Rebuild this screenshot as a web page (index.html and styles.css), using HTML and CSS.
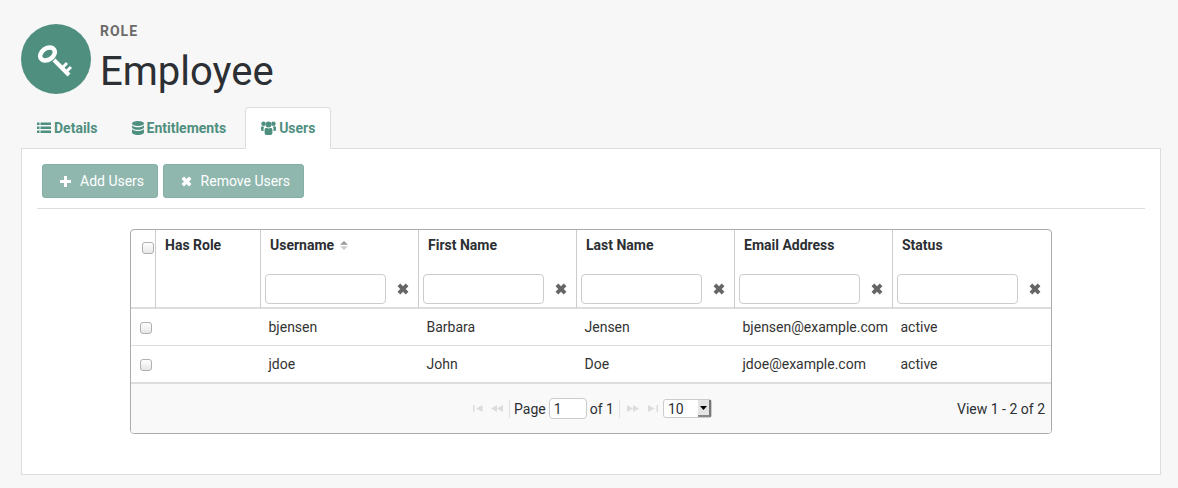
FILE: index.html
```html
<!DOCTYPE html>
<html lang="en">
<head>
  <meta charset="UTF-8" />
  <title>Role – Employee</title>
  <link rel="stylesheet" href="styles.css">
</head>
<body>
  <header class="page-head">
    <div class="avatar">
      <svg width="70" height="70" viewBox="0 0 70 70">
        <g fill="none" stroke="#fff">
          <ellipse cx="26.500" cy="30" rx="8" ry="5.700" stroke-width="4.400" transform="rotate(-35 26.500 30)"/>
          <path d="M33 36L48 51" stroke-width="4"/>
          <path d="M41 44l5-5M45 48l5-5" stroke-width="3"/>
        </g>
      </svg>
    </div>
    <div class="titles">
      <div class="kind">ROLE</div>
      <h1>Employee</h1>
    </div>
  </header>

  <nav class="tabs">
    <a class="tab">
      <svg class="ico" width="14" height="12" viewBox="0 0 14 12"><path d="M0 .5h2.500v2.500H0zM3.500 .5H14v2.500H3.500zM0 4.500h2.500v2.500H0zM3.500 4.500H14v2.500H3.500zM0 8.500h2.500V11H0zM3.500 8.500H14V11H3.500z"/></svg>Details
    </a>
    <a class="tab">
      <svg class="ico" width="12" height="14" viewBox="0 0 12 14"><ellipse cx="6" cy="2.500" rx="6" ry="2.500"/><path d="M0 4.200c1 1.400 3.500 2 6 2s5-.6 6-2v2.300c-.6 1.500-3.200 2.300-6 2.300s-5.400-.8-6-2.300zM0 8c1 1.400 3.500 2 6 2s5-.6 6-2v3.300C12 13 9.300 14 6 14s-6-1-6-2.700z"/></svg>Entitlements
    </a>
    <a class="tab active">
      <svg class="ico" width="15" height="14" viewBox="0 0 15 14"><circle cx="7.500" cy="3.600" r="3"/><circle cx="2.500" cy="2.800" r="2.200"/><circle cx="12.500" cy="2.800" r="2.200"/><path d="M3.600 8.500C3.600 7.500 4.600 6.700 5.600 7c1.200.5 2.600.5 3.800 0 1-.3 2 .5 2 1.500v3.600c0 1.200-.9 1.900-1.800 1.900H5.400c-.9 0-1.800-.7-1.800-1.900zM0 6.500c0-1 1.200-1.300 2-1.100.5.200 1 .3 1.600.2-.7.600-1.100 1.500-1.100 2.600v1.700H1.200C.5 9.900 0 9.400 0 8.700zM15 6.500c0-1-1.200-1.300-2-1.100-.5.200-1 .3-1.600.2.700.6 1.100 1.500 1.100 2.600v1.700h1.300c.7 0 1.200-.5 1.200-1.200z"/></svg>Users
    </a>
  </nav>

  <section class="panel">
    <div class="toolbar">
      <button class="btn">
        <svg width="11" height="11" viewBox="0 0 11 11"><path d="M4 0h3v4h4v3H7v4H4V7H0V4h4z"/></svg>Add Users
      </button>
      <button class="btn">
        <svg width="11" height="11" viewBox="0 0 11 11"><path d="M3 .5l2.500 2.500L8 .5l2.500 2.500L8 5.500 10.500 8 8 10.500 5.500 8 3 10.500.5 8 3 5.500.5 3z"/></svg>Remove Users
      </button>
    </div>

    <div class="grid">
      <table>
        <colgroup>
          <col class="c-check"><col class="c-role"><col class="c-data"><col class="c-data"><col class="c-data"><col class="c-data"><col>
        </colgroup>
        <thead>
          <tr>
            <th class="cell-check"><input type="checkbox"></th>
            <th class="th-plain">Has Role</th>
            <th>
              <div class="th-label">Username
                <svg class="sort" width="8" height="9" viewBox="0 0 8 9"><path d="M4 0l4 3.800H0z" fill="#999"/><path d="M4 9L0 5.200h8z" fill="#ccc"/></svg>
              </div>
              <div class="filter"><input type="text"><svg class="clear" width="12" height="12" viewBox="0 0 11 11"><path d="M3 .5l2.500 2.500L8 .5l2.500 2.500L8 5.500 10.500 8 8 10.500 5.500 8 3 10.500.5 8 3 5.500.5 3z"/></svg></div>
            </th>
            <th>
              <div class="th-label">First Name</div>
              <div class="filter"><input type="text"><svg class="clear" width="12" height="12" viewBox="0 0 11 11"><path d="M3 .5l2.500 2.500L8 .5l2.500 2.500L8 5.500 10.500 8 8 10.500 5.500 8 3 10.500.5 8 3 5.500.5 3z"/></svg></div>
            </th>
            <th>
              <div class="th-label">Last Name</div>
              <div class="filter"><input type="text"><svg class="clear" width="12" height="12" viewBox="0 0 11 11"><path d="M3 .5l2.500 2.500L8 .5l2.500 2.500L8 5.500 10.500 8 8 10.500 5.500 8 3 10.500.5 8 3 5.500.5 3z"/></svg></div>
            </th>
            <th>
              <div class="th-label">Email Address</div>
              <div class="filter"><input type="text"><svg class="clear" width="12" height="12" viewBox="0 0 11 11"><path d="M3 .5l2.500 2.500L8 .5l2.500 2.500L8 5.500 10.500 8 8 10.500 5.500 8 3 10.500.5 8 3 5.500.5 3z"/></svg></div>
            </th>
            <th>
              <div class="th-label">Status</div>
              <div class="filter"><input type="text"><svg class="clear" width="12" height="12" viewBox="0 0 11 11"><path d="M3 .5l2.500 2.500L8 .5l2.500 2.500L8 5.500 10.500 8 8 10.500 5.500 8 3 10.500.5 8 3 5.500.5 3z"/></svg></div>
            </th>
          </tr>
        </thead>
        <tbody>
          <tr>
            <td class="cell-check"><input type="checkbox"></td>
            <td></td>
            <td>bjensen</td>
            <td>Barbara</td>
            <td>Jensen</td>
            <td>bjensen@example.com</td>
            <td>active</td>
          </tr>
          <tr>
            <td class="cell-check"><input type="checkbox"></td>
            <td></td>
            <td>jdoe</td>
            <td>John</td>
            <td>Doe</td>
            <td>jdoe@example.com</td>
            <td>active</td>
          </tr>
        </tbody>
      </table>

      <div class="pager">
        <div class="pager-main">
          <svg class="pg first" width="10" height="7" viewBox="0 0 10 7"><path d="M0 0h1.500v7H0zM9.500 0v7L3 3.500z"/></svg>
          <svg class="pg prev" width="12" height="7" viewBox="0 0 12 7"><path d="M6 0v7L0 3.500zM12 0v7L6 3.500z"/></svg>
          <span class="sep"></span>
          <span class="page-label">Page</span>
          <input class="page-input" type="text" value="1">
          <span>of 1</span>
          <span class="sep sep-right"></span>
          <svg class="pg next" width="12" height="7" viewBox="0 0 12 7"><path d="M0 0v7l6-3.500zM6 0v7l6-3.500z"/></svg>
          <svg class="pg last" width="10" height="7" viewBox="0 0 10 7"><path d="M0 0v7l6.500-3.500zM8.500 0H10v7H8.500z"/></svg>
          <div class="page-size">
            <span>10</span>
            <span class="arrow"><svg width="7" height="4" viewBox="0 0 7 4"><path d="M0 0h7L3.500 4z"/></svg></span>
          </div>
        </div>
        <div class="pager-info">View 1 - 2 of 2</div>
      </div>
    </div>
  </section>
</body>
</html>
```

FILE: styles.css
```css
html, body {
  height: 100%;
}

body {
  background-color: #f7f7f7;
  color: #2c2f33;
  font-family: Roboto, "Liberation Sans", sans-serif;
  font-size: 14px;
  margin: 0;
  padding: 24px 17px 13px 21px;
  box-sizing: border-box;
  overflow: hidden;
}

.page-head {
  display: flex;
  gap: 9px;
  height: 83px;
}

.avatar {
  width: 70px;
  height: 70px;
  border-radius: 50%;
  background: #4f8f80;
}

.kind {
  font-size: 14px;
  font-weight: 700;
  letter-spacing: 1px;
  color: #6c6a69;
  line-height: 15px;
}

h1 {
  font-size: 40px;
  font-weight: 400;
  line-height: 50px;
  margin: 8px 0 0;
}

.tabs {
  display: flex;
  height: 42px;
  margin-bottom: -1px;
  position: relative;
}

.tab {
  display: flex;
  align-items: center;
  gap: 3px;
  padding: 0 15px;
  color: #4f8f80;
  font-weight: 700;
  font-size: 14px;
  border: 1px solid transparent;
  border-radius: 4px 4px 0 0;
  margin-right: 2px;
}

.tab.active {
  background: #fff;
  border-color: #ddd;
  border-bottom-color: #fff;
  margin-left: 1px;
}

.ico {
  fill: #4f8f80;
}

.panel {
  background: #fff;
  border: 1px solid #ddd;
  height: 327px;
  box-sizing: border-box;
  padding: 15px 15px 0;
}

.toolbar {
  display: flex;
  gap: 5px;
  padding: 0 0 10px 5px;
  border-bottom: 1px solid #ddd;
}

.btn {
  display: flex;
  align-items: center;
  gap: 9px;
  height: 34px;
  padding: 0 12.500px 0 17px;
  background: #8fb7ae;
  border: 1px solid #85afa6;
  border-radius: 3px;
  color: #fff;
  font-family: inherit;
  font-size: 14px;
}

.btn svg {
  fill: #fff;
}

.grid {
  width: 922px;
  height: 205px;
  box-sizing: border-box;
  margin: 20px auto 0;
  border: 1px solid #aaa;
  border-radius: 4px;
  overflow: hidden;
  display: flex;
  flex-direction: column;
}

table {
  width: 100%;
  table-layout: fixed;
  border-collapse: separate;
  border-spacing: 0;
}

.c-check {
  width: 24px;
}

.c-role {
  width: 105px;
}

.c-data {
  width: 158px;
}

th {
  height: 79px;
  padding: 0;
  text-align: left;
  vertical-align: top;
  font-weight: 700;
  border-left: 1px solid #ccc;
  border-bottom: 2px solid #ddd;
  box-sizing: border-box;
}

th:first-child {
  border-left: none;
}

th.th-plain {
  padding: 7px 9px;
  line-height: 16px;
}

.th-label {
  height: 44px;
  padding: 7px 9px 0;
  box-sizing: border-box;
  line-height: 16px;
}

.sort {
  margin-left: 2px;
}

.filter {
  display: flex;
  align-items: center;
  padding-left: 4px;
}

.filter input {
  width: 121px;
  height: 30px;
  box-sizing: border-box;
  border: 1px solid #ccc;
  border-radius: 4px;
  background: #fff;
  padding: 0 4px;
}

.clear {
  margin-left: 11px;
  fill: #666;
}

input[type="checkbox"] {
  appearance: none;
  display: inline-block;
  width: 12px;
  height: 12px;
  margin: 0;
  border: 1px solid #b0b0b0;
  border-radius: 3px;
  background: linear-gradient(#fff, #e6e6e6);
  vertical-align: middle;
}

td {
  height: 37px;
  box-sizing: border-box;
  padding: 0 8.500px;
  border-bottom: 1px solid #ddd;
  font-size: 14px;
  color: #333;
  white-space: nowrap;
}

td.cell-check {
  padding: 0 0 0 6px;
  text-align: center;
}

th.cell-check {
  padding: 9px 0 0 10px;
  text-align: center;
}

tbody tr:last-child td {
  height: 38px;
  border-bottom: 2px solid #ddd;
}

.pager {
  flex: 1;
  background: #f9f9f9;
  display: grid;
  grid-template-columns: 1fr auto 1fr;
  align-items: center;
}

.pager-main {
  grid-column: 2;
  display: flex;
  align-items: center;
  gap: 3px;
  margin-left: 3px;
}

.pg {
  fill: #dcdcdc;
}

.first {
  margin-right: 5px;
}

.prev {
  margin-right: 3px;
}

.sep {
  width: 1px;
  height: 18px;
  background: #e2e2e2;
}

.page-label {
  margin-left: 1px;
}

.sep-right {
  margin: 0 4px 0 2px;
}

.next {
  margin-right: 6px;
}

.page-input {
  width: 38px;
  height: 21px;
  box-sizing: border-box;
  border: 1px solid #ccc;
  border-radius: 4px;
  padding: 0 4px;
  font-family: inherit;
  font-size: 14px;
  color: #333;
}

.page-size {
  display: flex;
  align-items: center;
  justify-content: space-between;
  width: 49px;
  height: 19px;
  box-sizing: border-box;
  border: 1px solid #ccc;
  border-radius: 3px;
  background: #fff;
  padding-left: 4px;
  margin-left: 2px;
}

.arrow {
  width: 13px;
  height: 17px;
  display: flex;
  align-items: center;
  justify-content: center;
  background: #e4e4e4;
  border-right: 2px solid #777;
  border-bottom: 2px solid #888;
  box-sizing: border-box;
}

.pager-info {
  grid-column: 3;
  justify-self: end;
  padding-right: 6px;
}
```
